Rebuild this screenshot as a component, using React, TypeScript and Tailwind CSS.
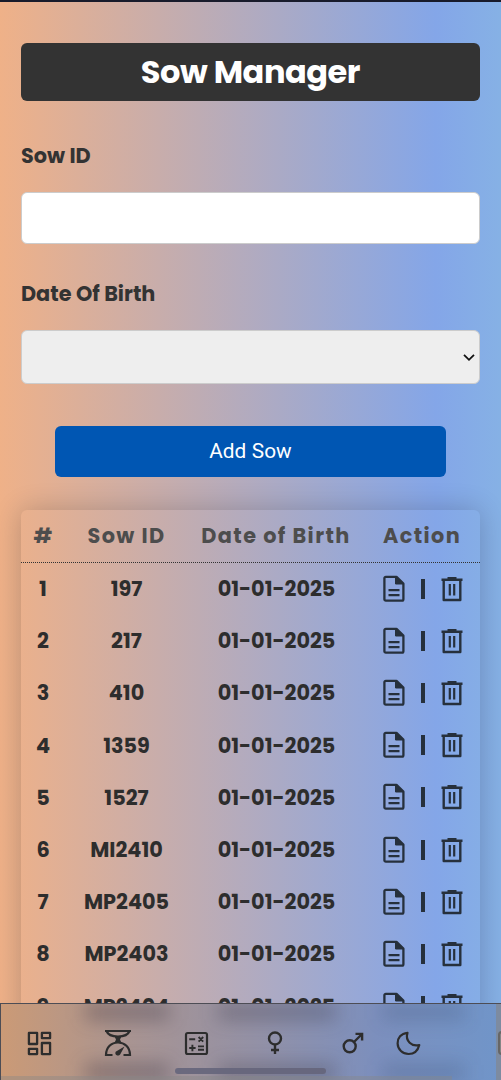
import React from "react";

const rows = [
  ["1", "197"], ["2", "217"], ["3", "410"], ["4", "1359"], ["5", "1527"],
  ["6", "MI2410"], ["7", "MP2405"], ["8", "MP2403"], ["9", "MP2404"],
];

function FileIcon() {
  return (
    <svg className="h-[28px] w-[22px]" viewBox="0 0 22 28" fill="none" stroke="currentColor" strokeWidth="2.3">
      <path d="M2.8 1.8H13.5L20.4 8.500V24.200a1.4 1.4 0 0 1-1.4 1.4H2.8a1.4 1.4 0 0 1-1.4-1.4V3.200a1.4 1.4 0 0 1 1.4-1.4Z" strokeLinejoin="round" />
      <path d="M12.500 1.700v7.300h7.500Z" fill="currentColor" strokeWidth="1" />
      <path d="M5.500 15.200h11M5.500 20.200h11" />
    </svg>
  );
}

function TrashIcon() {
  return (
    <svg className="h-[26px] w-[22px]" viewBox="0 0 22 26" fill="none" stroke="currentColor" strokeWidth="2.400">
      <path d="M0.500 3.800h21M6.500 2.200h9M2.700 4v20h16.600V4" strokeLinejoin="round" />
      <path d="M8.800 8v11.500M13.200 8v11.500" strokeWidth="2.200" />
    </svg>
  );
}

function GridIcon() {
  return (
    <svg className="h-[25px] w-[25px]" viewBox="0 0 26 26" fill="none" stroke="currentColor" strokeWidth="2.400" strokeLinejoin="round">
      <path d="M2 2h8.500v11.500H2zM15.500 2H24v5.500h-8.500zM15.500 12.500H24V24h-8.500zM2 18.500h8.500V24H2z" />
    </svg>
  );
}

function ScaleIcon() {
  return (
    <svg className="h-[28px] w-[28px]" viewBox="0 0 28 28" fill="none" stroke="currentColor" strokeWidth="2.200">
      <path d="M1 2h26M2.500 2c1.500 4 6 5.500 11.500 5.500S24 6 25.500 2" />
      <path d="M10.500 7.500h7l-1.500 3 1.500 3.500h-7l1.500-3.500Z" fill="currentColor" stroke="none" />
      <path d="M8.500 26H2c0-8 5.500-12.500 12-12.500S26 18 26 26h-6.500" />
      <path d="m20.500 17.500-8.500 5c-1.500 1.500-.2 4.500 2.500 4 1.200-.2 1.700-1 2.200-2Z" fill="currentColor" stroke="none" />
    </svg>
  );
}

function CalculatorIcon() {
  return (
    <svg className="h-[25px] w-[25px]" viewBox="0 0 25 25" fill="none" stroke="currentColor" strokeWidth="2">
      <rect x="2" y="2" width="21" height="21" rx="1.800" strokeWidth="2.200" />
      <path d="M5.200 8.200h6M14.600 6l4.600 4.600M19.200 6l-4.600 4.600M5.200 17h6.400M8.400 13.800v6.400M14 15.400h6M14 18.800h6" strokeWidth="1.900" />
    </svg>
  );
}

function FemaleIcon() {
  return (
    <svg className="h-[24px] w-[16px]" viewBox="0 0 16 24" fill="none" stroke="currentColor" strokeWidth="2.400">
      <circle cx="8" cy="7.500" r="6" />
      <path d="M8 13.500V23M4 19h8" />
    </svg>
  );
}

function MaleIcon() {
  return (
    <svg className="h-[22px] w-[22px]" viewBox="0 0 22 22" fill="none" stroke="currentColor" strokeWidth="2.400">
      <circle cx="7.700" cy="14.300" r="6" />
      <path d="m12 10 8-8M13.500 1.900h6.600v6.600" />
    </svg>
  );
}

function MoonIcon() {
  return (
    <svg className="h-[25px] w-[25px]" viewBox="0 0 25 25" fill="none" stroke="currentColor" strokeWidth="2.200" strokeLinejoin="round">
      <path d="M11.500 1.800C5 2.500 1.500 7 1.600 12.500c.2 6 5 10.500 11 10.500 5.200 0 9.200-3 10.700-9-7.500 2-14.300-4-11.800-12.200Z" />
    </svg>
  );
}

const cols = "grid grid-cols-[44px_123px_176px_116px]";
const field = "rounded-md border border-[#ccc]";
const label = "block h-8 text-[20.8px] leading-8 font-bold text-[#333]";

export default function App() {
  return (
    <div className="flex h-[1080px] w-full flex-col overflow-hidden border-t-2 border-[#181b2b] bg-[linear-gradient(to_right,#efb188_0%,#84a6e8_87%,#86b1e5_100%)] font-[Poppins,Inter,sans-serif] text-[#2d2d2d]">
      <main className="min-h-0 flex-1 overflow-hidden px-[21px] pt-[41px]">
        <h1 className="flex h-[58px] items-center justify-center rounded-md bg-[#333] text-[32px] font-bold tracking-[-0.440px] text-white">Sow Manager</h1>
        <label className={`mt-[39px] ${label}`}>Sow ID</label>
        <div className={`mt-[20px] h-[52px] bg-white ${field}`} />
        <label className={`mt-[34px] ${label}`}>Date Of Birth</label>
        <div className={`mt-[20px] flex h-[54px] items-center justify-end bg-[#eee] pr-1 ${field}`}>
          <svg className="h-3 w-3" viewBox="0 0 12 12" fill="none" stroke="#111" strokeWidth="1.800"><path d="m1 3.800 5 5 5-5" /></svg>
        </div>
        <button className="mx-auto mt-[42px] block h-[51px] w-[391px] rounded-md bg-[#0056b3] font-[Roboto,sans-serif] text-[20.8px] tracking-[0.100px] text-white">Add Sow</button>
        <section className="mt-[33px] h-[700px] rounded-md text-center text-[20.8px] font-bold shadow-[0_0_28px_rgba(0,0,0,0.2)]">
          <div className={`${cols} h-[53px] items-center border-b border-dotted border-[#333] text-[#4d4d4d]`}>
            <span>#</span>
            <span className="tracking-[1.400px]">Sow ID</span>
            <span className="tracking-[1.400px]">Date of Birth</span>
            <span className="tracking-[1.400px]">Action</span>
          </div>
          {rows.map(([n, id]) => (
            <div key={n} className={`${cols} h-[52.200px] items-center pb-px`}>
              <span>{n}</span>
              <span>{id}</span>
              <span className="pl-px">01-01-2025</span>
              <span className="flex items-center justify-center pl-0.5 text-[#26303c]">
                <FileIcon />
                <span className="mx-[16px] h-5 w-[4px] bg-current" />
                <TrashIcon />
              </span>
            </div>
          ))}
        </section>
      </main>
      <nav className="relative h-[77px] shrink-0 overflow-hidden border-t border-l border-[#4d4d55] bg-[linear-gradient(to_right,#cb9a76_0%,#a99491_25%,#9491a5_50%,#7c8fbd_75%,#7095c9_100%)] text-[#2d2d2d]">
        <div className="absolute inset-x-0 top-0 flex h-full flex-col justify-between blur-[9px]">
          {["top", "bottom"].map((edge) => (
            <div key={edge} className="grid h-4 grid-cols-[84px_84px_49px_118px_47px_82px]">
              <span />
              <span className="bg-[#302c38]/35" />
              <span />
              <span className="bg-[#302c38]/30" />
              <span />
              <span className="bg-[#243150]/20" />
            </div>
          ))}
        </div>
        <div className="relative grid h-[78px] w-[600px] grid-cols-[77px_79px_79px_78px_78px_32px_72px_105px] items-center">
          <span className="flex justify-center"><GridIcon /></span>
          <span className="flex justify-center"><ScaleIcon /></span>
          <span className="flex justify-center"><CalculatorIcon /></span>
          <span className="flex justify-center"><FemaleIcon /></span>
          <span className="flex justify-center"><MaleIcon /></span>
          <span className="flex justify-center"><MoonIcon /></span>
          <span />
          <span className="flex h-full items-center bg-[#858585]/60 pl-0.5">
            <span className="h-6 w-20 rounded-[4px] border-2 border-[#666] bg-[#858585]" />
          </span>
        </div>
        <div className="absolute bottom-[6px] left-[174px] h-[6px] w-[151px] rounded-full bg-[#65657b]/90" />
        <div className="absolute bottom-0 left-0 h-1 w-[451px] bg-[#888]/40" />
      </nav>
    </div>
  );
}
